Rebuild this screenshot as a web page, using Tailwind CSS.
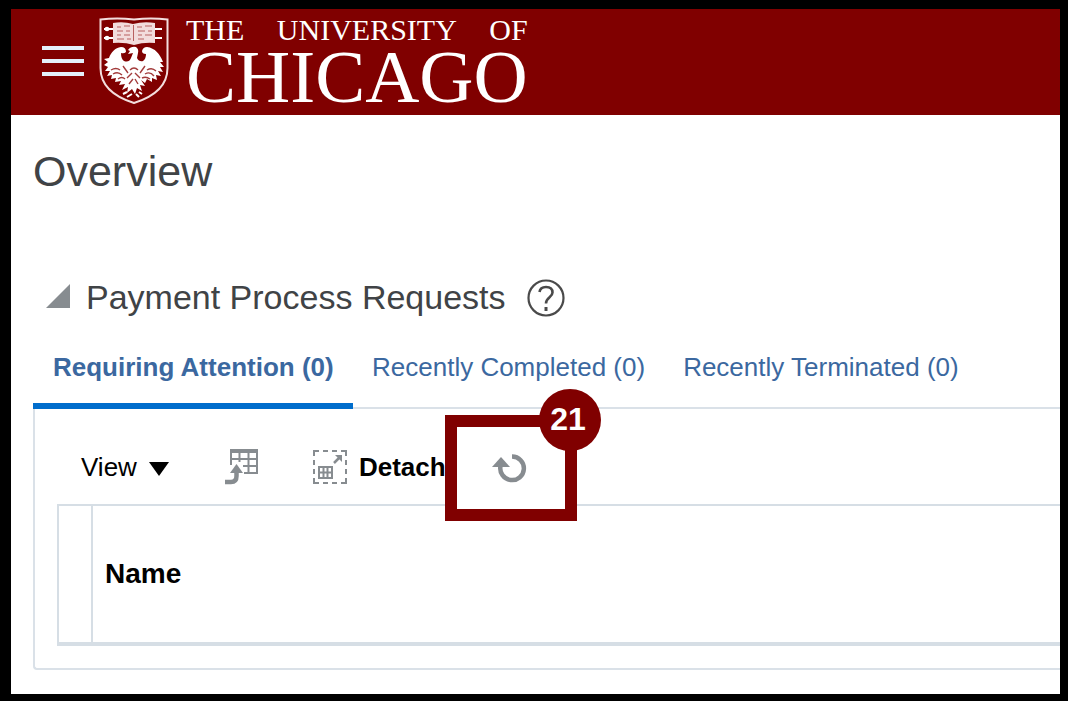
<!DOCTYPE html>
<html lang="en">
<head>
    <meta charset="UTF-8">
    <meta name="viewport" content="width=device-width, initial-scale=1.0">
    <title>Overview - Payment Process Requests</title>
    <script src="https://cdn.jsdelivr.net/npm/@tailwindcss/browser@4"></script>
</head>
<body class="bg-black min-h-screen flex flex-col pt-[9px] pr-2 pb-[7px] pl-[11px] font-['Liberation_Sans',sans-serif] overflow-hidden">
    <header class="bg-[#800000] h-[106px] shrink-0 flex items-center pl-[31px] pb-[2px]">
        <button type="button" aria-label="Navigator" class="w-[42px] flex flex-col gap-[9px]">
            <span class="h-1 w-full bg-[#e4f0fa]"></span>
            <span class="h-1 w-full bg-[#e4f0fa]"></span>
            <span class="h-1 w-full bg-[#e4f0fa]"></span>
        </button>
        <a href="#" class="flex items-center ml-[15px] text-white" aria-label="The University of Chicago">
            <!-- shield: book above a phoenix -->
            <svg class="w-[70px] h-[88px]" viewBox="0 0 70 88" fill="none">
                <path d="M1.500 2.500Q18 .5 35 2.500Q52 .5 68.500 2.500V51C68.500 69 54 80 35 86C16 80 1.500 69 1.500 51Z" stroke="#f3dede" stroke-width="2"/>
                <path d="M14 6Q24 4 34 7Q45 4 56 6V26Q45 25 35 28Q25 25 14 26Z" fill="#f2dcdc"/>
                <path d="M34.500 8V24M18 10h4M25 9h6M38 10h5M46 9h7M18 14h6M27 14h4M39 14h7M49 14h4M18 18h4M25 18h6M39 18h4M46 18h7M18 22h7M28 22h4M39 22h6" stroke="#b86060" stroke-width="1"/>
                <path d="M5 12h9M5 21h9M56 12h7M56 21h7" stroke="#fff" stroke-width="2"/>
                <circle cx="8" cy="12" r="2.300" fill="#fff"/>
                <circle cx="8" cy="21" r="2.300" fill="#fff"/>
                <path d="M29 33Q32 29 37 30Q40 32 39 36L38 41Q40 45 44 44Q47 42 47 37Q43 37 43 34Q44 30 48 30C56 31 61 37 64 45L61 45L65 50L61 50L64 55L59 54L62 59L57 58L58 63L53 61L53 65L48 62L46 66L42 63L46 69L41 68L43 74L38 71L36 77L33 72L28 76L29 70L23 73L26 67L20 68L22 64L16 65L17 61L12 62L13 58L8 59L11 54L6 54L9 50L5 48L9 45L5 42L10 41C12 35 16 31 22 30Q27 30 27 35Q25 37 22 36Q22 42 25 44Q30 46 32 41L34 36L29 37L31 34Z" fill="#fff"/>
                <path d="M12 53q5-3 9 0M14 57q5-3 9 1M19 62q4-3 7 0M48 53q5-3 9 1M46 57q5-3 9 2M43 61q4-2 8 1M31 53q4-4 8 0M28 61l5-5M41 61l-5-5M30 67l4-5M39 67l-3-5M24 49l5 7M46 49l-5 7" stroke="#a33c3c" stroke-width="1.400"/>
                <path d="M24 77l4-2M43 77l-3-2M28 80l5-3M40 80l-3-3" stroke="#fff" stroke-width="2"/>
            </svg>
            <span class="flex flex-col pb-[2px] ml-[17px] font-['Liberation_Serif',serif]">
                <span class="flex justify-between text-[30px] leading-[34px]"><span>THE</span><span>UNIVERSITY</span><span>OF</span></span>
                <span class="text-[75px] leading-[60px]">CHICAGO</span>
            </span>
        </a>
    </header>

    <main class="bg-white grow flex flex-col pl-[22px] pb-6">
        <h1 class="mt-[30px] text-[43px] leading-[52px] text-[#404346]">Overview</h1>

        <section class="mt-[76px] grow flex flex-col">
            <div class="flex items-center h-12 pl-[13px]">
                <button type="button" aria-label="Collapse Payment Process Requests" class="pb-[2px]">
                    <svg class="w-6 h-6" viewBox="0 0 24 24"><path d="M24 0V24H0Z" fill="#878c90"/></svg>
                </button>
                <h2 class="ml-4 text-[34px] leading-10 text-[#404346]">Payment Process Requests</h2>
                <button type="button" aria-label="Help" class="ml-[21px] pt-[2px]">
                    <svg class="w-[38px] h-[38px]" viewBox="0 0 38 38" fill="none" stroke="#4a4a4a">
                        <circle cx="19" cy="19" r="17.500" stroke-width="2.200"/>
                        <path d="M12.500 13C13 9.500 15.500 8 19 8C23 8 25.500 10 25.500 13.500C25.500 18.500 19 18 19 24.500" stroke-width="2.600"/>
                        <path d="M19 28v4" stroke-width="3"/>
                    </svg>
                </button>
            </div>

            <nav class="relative z-10 flex h-[88px] text-[26px] leading-8 text-[#3b68a0] whitespace-nowrap">
                <a href="#" class="w-[320px] pl-5 pt-[30px] border-b-6 border-[#006dcc] font-bold">Requiring Attention (0)</a>
                <a href="#" class="pl-[19px] pt-[30px]">Recently Completed (0)</a>
                <a href="#" class="pl-[38px] pt-[30px]">Recently Terminated (0)</a>
            </nav>

            <div class="-mt-[2px] grow flex flex-col border-2 border-r-0 border-[#dae1e8] rounded-bl pl-[22px] pb-[22px]">
                <div class="relative flex items-center h-[95px] pt-5 pl-6 text-[26px] leading-8 text-black">
                    <button type="button" class="flex items-center gap-3">
                        View
                        <svg class="w-5 h-[14px] mt-1" viewBox="0 0 20 14"><path d="M0 0H20L10 14Z" fill="#000"/></svg>
                    </button>
                    <button type="button" aria-label="Freeze" class="ml-14">
                        <svg class="w-[34px] h-9" viewBox="0 0 34 36" fill="none" stroke="#878c90">
                            <path d="M5 2H33" stroke-width="4"/>
                            <path d="M6 2V16M14.500 2V13M23.500 2V24M32 2V25M6 10H33M18 17H33M19 24H33" stroke-width="2"/>
                            <path d="M0 33H6Q11.500 33 11.500 27V23" stroke-width="4.500"/>
                            <path d="M11.500 15L18 24H5Z" fill="#878c90" stroke="none"/>
                        </svg>
                    </button>
                    <button type="button" class="ml-[54px] flex items-center gap-3 font-bold">
                        <svg class="w-[34px] h-[34px]" viewBox="0 0 34 34" fill="none" stroke="#878c90" stroke-width="2">
                            <path d="M1 6V1H6M10 1h5M19 1h5M28 1H33V6M33 10v5M33 19v5M33 28V33H28M24 33h-5M15 33h-5M6 33H1V28M1 24v-5M1 15v-5"/>
                            <path d="M6 17H19V28H6ZM10.500 17V28M14.500 17V28M6 22.500H19"/>
                            <path d="M21 13L27 7" stroke-width="2.500"/>
                            <path d="M22 5H29V12Z" fill="#878c90" stroke="none"/>
                        </svg>
                        Detach
                    </button>
                    <!-- step callout drawn over the refresh button -->
                    <div class="absolute left-[388px] top-[6px] w-[132px] h-[106px] border-12 border-[#800000] bg-white flex items-center justify-center">
                        <button type="button" aria-label="Refresh" class="pr-[2px]">
                            <svg class="w-9 h-[30px]" viewBox="0 0 36 30" fill="none">
                                <path d="M20 3.500A11.800 11.800 0 1 1 8.500 13" stroke="#878c90" stroke-width="4.500"/>
                                <path d="M9 4L18 14H0Z" fill="#878c90"/>
                            </svg>
                        </button>
                        <span class="absolute -top-[38px] -right-9 w-[62px] h-[62px] rounded-full bg-[#800000] text-white text-[32px] leading-[60px] font-bold text-center pr-1">21</span>
                    </div>
                </div>

                <table class="w-full grow border-2 border-r-0 border-b-4 border-[#d6dee5] text-left">
                    <thead>
                        <tr>
                            <td class="w-[34px] border-r-2 border-[#d6dee5]"></td>
                            <th scope="col" class="pl-3 text-[28px] leading-8 font-bold text-black">Name</th>
                        </tr>
                    </thead>
                </table>
            </div>
        </section>
    </main>
</body>
</html>
